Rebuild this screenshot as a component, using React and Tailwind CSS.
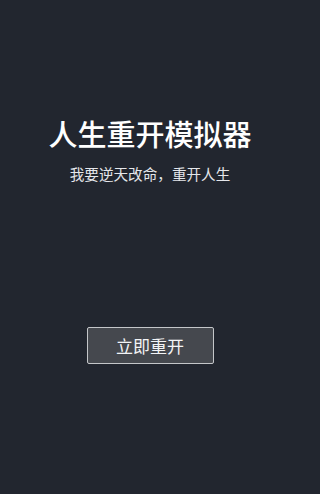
export default function App() {
  return (
    <div
      className="w-full min-h-screen bg-[#22262f] text-white"
      style={{ fontFamily: '"Noto Sans CJK SC", "Noto Sans", sans-serif' }}
    >
      <div className="w-[300px] h-[494px] flex flex-col items-center">
        <h1 className="mt-[114px] text-[29px] leading-[38px] font-medium">人生重开模拟器</h1>
        <p className="mt-[12px] text-[14.6px] leading-[20px] text-gray-200">我要逆天改命，重开人生</p>
        <button className="mt-[143px] w-[127px] h-[37px] bg-[#45484e] border border-[#c4c6c9] rounded-[2px] text-[17px] text-gray-100 flex items-center justify-center">
          立即重开
        </button>
      </div>
    </div>
  );
}
